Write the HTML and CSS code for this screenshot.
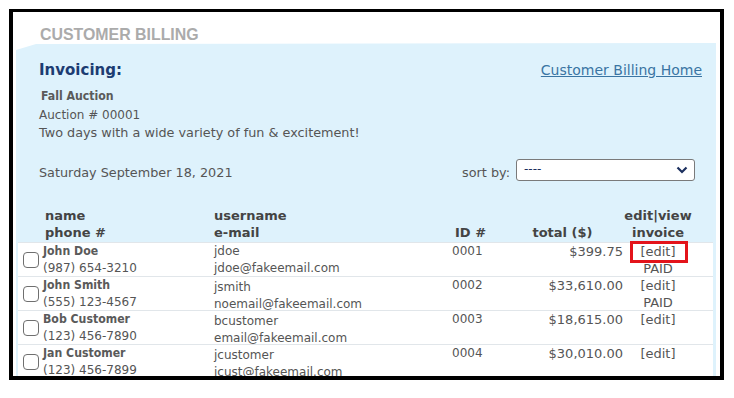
FILE: index.html
```html
<!DOCTYPE html>
<html lang="en">
<head>
    <meta charset="UTF-8">
    <meta name="viewport" content="width=device-width, initial-scale=1.0">
    <title>Customer Billing - Invoicing</title>
    <link rel="stylesheet" href="styles.css">
</head>
<body>

    <div class="frame">
        <h1 class="page-title">Customer Billing</h1>

        <div class="panel">
            <div class="panel-head">
                <h2>Invoicing:</h2>
                <a href="#" class="home-link">Customer Billing Home</a>
            </div>

            <div class="event">
                <div class="event-name">Fall Auction</div>
                <div class="event-num">Auction # 00001</div>
                <div class="event-desc">Two days with a wide variety of fun &amp; excitement!</div>
            </div>

            <div class="toolbar">
                <span class="event-date">Saturday September 18, 2021</span>
                <label class="sort">
                    <span class="sort-label">sort by:</span>
                    <span class="select">
                        <span class="select-value">----</span>
                        <svg class="chevron" width="12" height="8" viewBox="0 0 12 8">
                            <path d="M1.5 1.5 L6 6 L10.5 1.5" fill="none" stroke="#1b2f5e" stroke-width="2.2"/>
                        </svg>
                    </span>
                </label>
            </div>

            <!-- Customer list -->
            <div class="customers">
                <div class="row head">
                    <div></div>
                    <div>name<br>phone #</div>
                    <div>username<br>e-mail</div>
                    <div class="id"><br>ID #</div>
                    <div class="total"><br>total ($)</div>
                    <div class="action">edit|view<br>invoice</div>
                </div>

                <div class="row">
                    <div class="check"><span class="box"></span></div>
                    <div><b>John Doe</b><br>(987) 654-3210</div>
                    <div>jdoe<br>jdoe@fakeemail.com</div>
                    <div class="id">0001</div>
                    <div class="total">$399.75</div>
                    <div class="action"><a href="#" class="edit marked">[edit]</a><br>PAID</div>
                </div>

                <div class="row">
                    <div class="check"><span class="box"></span></div>
                    <div><b>John Smith</b><br>(555) 123-4567</div>
                    <div class="shift">jsmith<br>noemail@fakeemail.com</div>
                    <div class="id">0002</div>
                    <div class="total">$33,610.00</div>
                    <div class="action"><a href="#" class="edit">[edit]</a><br>PAID</div>
                </div>

                <div class="row">
                    <div class="check"><span class="box"></span></div>
                    <div><b>Bob Customer</b><br>(123) 456-7890</div>
                    <div class="shift">bcustomer<br>email@fakeemail.com</div>
                    <div class="id">0003</div>
                    <div class="total">$18,615.00</div>
                    <div class="action"><a href="#" class="edit">[edit]</a></div>
                </div>

                <div class="row">
                    <div class="check"><span class="box"></span></div>
                    <div><b>Jan Customer</b><br>(123) 456-7899</div>
                    <div class="shift">jcustomer<br>jcust@fakeemail.com</div>
                    <div class="id">0004</div>
                    <div class="total">$30,010.00</div>
                    <div class="action"><a href="#" class="edit">[edit]</a></div>
                </div>
            </div>
        </div>
    </div>

</body>
</html>
```

FILE: styles.css
```css
body {
    margin: 0;
    padding: 0;
    background-color: #fff;
    font-family: "DejaVu Sans", Verdana, sans-serif;
    font-size: 12px;
    color: #555;
}
.frame {
    margin: 9px 0 0 9px;
    width: 715px;
    height: 371px;
    box-sizing: border-box;
    border: 4px solid #000;
    border-top-width: 3px;
    background: #fff;
    overflow: hidden;
}
.page-title {
    margin: 0;
    padding: 14px 0 0 27px;
    height: 17px;
    line-height: 17px;
    font-family: "Liberation Sans", Arial, sans-serif;
    font-size: 15.9px;
    font-weight: bold;
    text-transform: uppercase;
    color: #ababab;
}
.panel {
    margin: 0 4px 0 3px;
    height: 400px;
    background-color: #def2fc;
    clip-path: polygon(0 7px, 20px 1px, 100% 0, 100% 100%, 0 100%);
}
.panel-head {
    display: flex;
    justify-content: space-between;
    align-items: center;
    padding: 17px 14px 0 23px;
    height: 20px;
}
.panel-head h2 {
    margin: 0;
    font-size: 15px;
    color: #1c3c72;
}
.home-link {
    font-size: 14px;
    color: #3a75a3;
}
.event {
    padding: 7px 0 0 23px;
    line-height: 18.5px;
}
.event-name {
    font-family: "DejaVu Sans Condensed", "DejaVu Sans", sans-serif;
    font-weight: bold;
    font-size: 12.2px;
    color: #5a5a5a;
    padding-left: 2px;
}
.event-desc {
    font-size: 12.8px;
}

.toolbar {
    display: flex;
    justify-content: space-between;
    align-items: flex-start;
    margin-top: 16px;
    padding: 0 21px 0 23px;
    height: 22px;
}
.event-date,
.sort-label {
    font-size: 12.8px;
    padding-top: 5px;
    line-height: 18px;
}
.sort {
    display: flex;
    align-items: flex-start;
    gap: 6px;
}
.select {
    position: relative;
    display: block;
    width: 177px;
    height: 20px;
    border: 1px solid #7a7a7a;
    border-radius: 3px;
    background: #fff;
}
.select-value {
    display: block;
    padding: 1px 0 0 7px;
    color: #1b2f5e;
    font-size: 12px;
    line-height: 17px;
}
.chevron {
    position: absolute;
    right: 6px;
    top: 6px;
}

/* customer table */
.customers {
    margin-top: 26px;
}
.row {
    display: grid;
    grid-template-columns: 25px 171px 236px 52px 121px 70px 1fr;
    margin: 0 3px 0 2px;
    height: 33px;
    line-height: 17px;
    background: #fff;
    border-top: 1px solid #e1e6ea;
}
.row.head {
    height: 34px;
    margin-bottom: 1px;
    background: none;
    border-top: none;
    font-weight: bold;
    font-size: 13px;
    color: #444;
}
.row.head > div:nth-child(2) {
    padding-left: 2px;
}
.row.head .id {
    padding-left: 5px;
    text-align: left;
}
.row.head .total {
    text-align: center;
}
.row b {
    font-family: "DejaVu Sans Condensed", "DejaVu Sans", sans-serif;
    font-size: 12.2px;
    color: #5a5a5a;
}
.shift {
    padding-top: 2px;
}
.check {
    position: relative;
}
.box {
    position: absolute;
    left: 5px;
    top: 9px;
    width: 16px;
    height: 16px;
    box-sizing: border-box;
    border: 1.6px solid #6f6f6f;
    border-radius: 4px;
    background: #fff;
}
.id {
    padding-left: 2px;
}
.total {
    text-align: right;
    font-size: 13px;
}
.action {
    text-align: center;
    font-size: 13px;
}
.edit {
    color: #555;
    text-decoration: none;
}
/* red callout around the first edit link */
.marked {
    position: relative;
}
.marked::after {
    content: "";
    position: absolute;
    left: -10px;
    right: -12px;
    top: -3px;
    bottom: -4px;
    border: 3px solid #e3141b;
}
```
